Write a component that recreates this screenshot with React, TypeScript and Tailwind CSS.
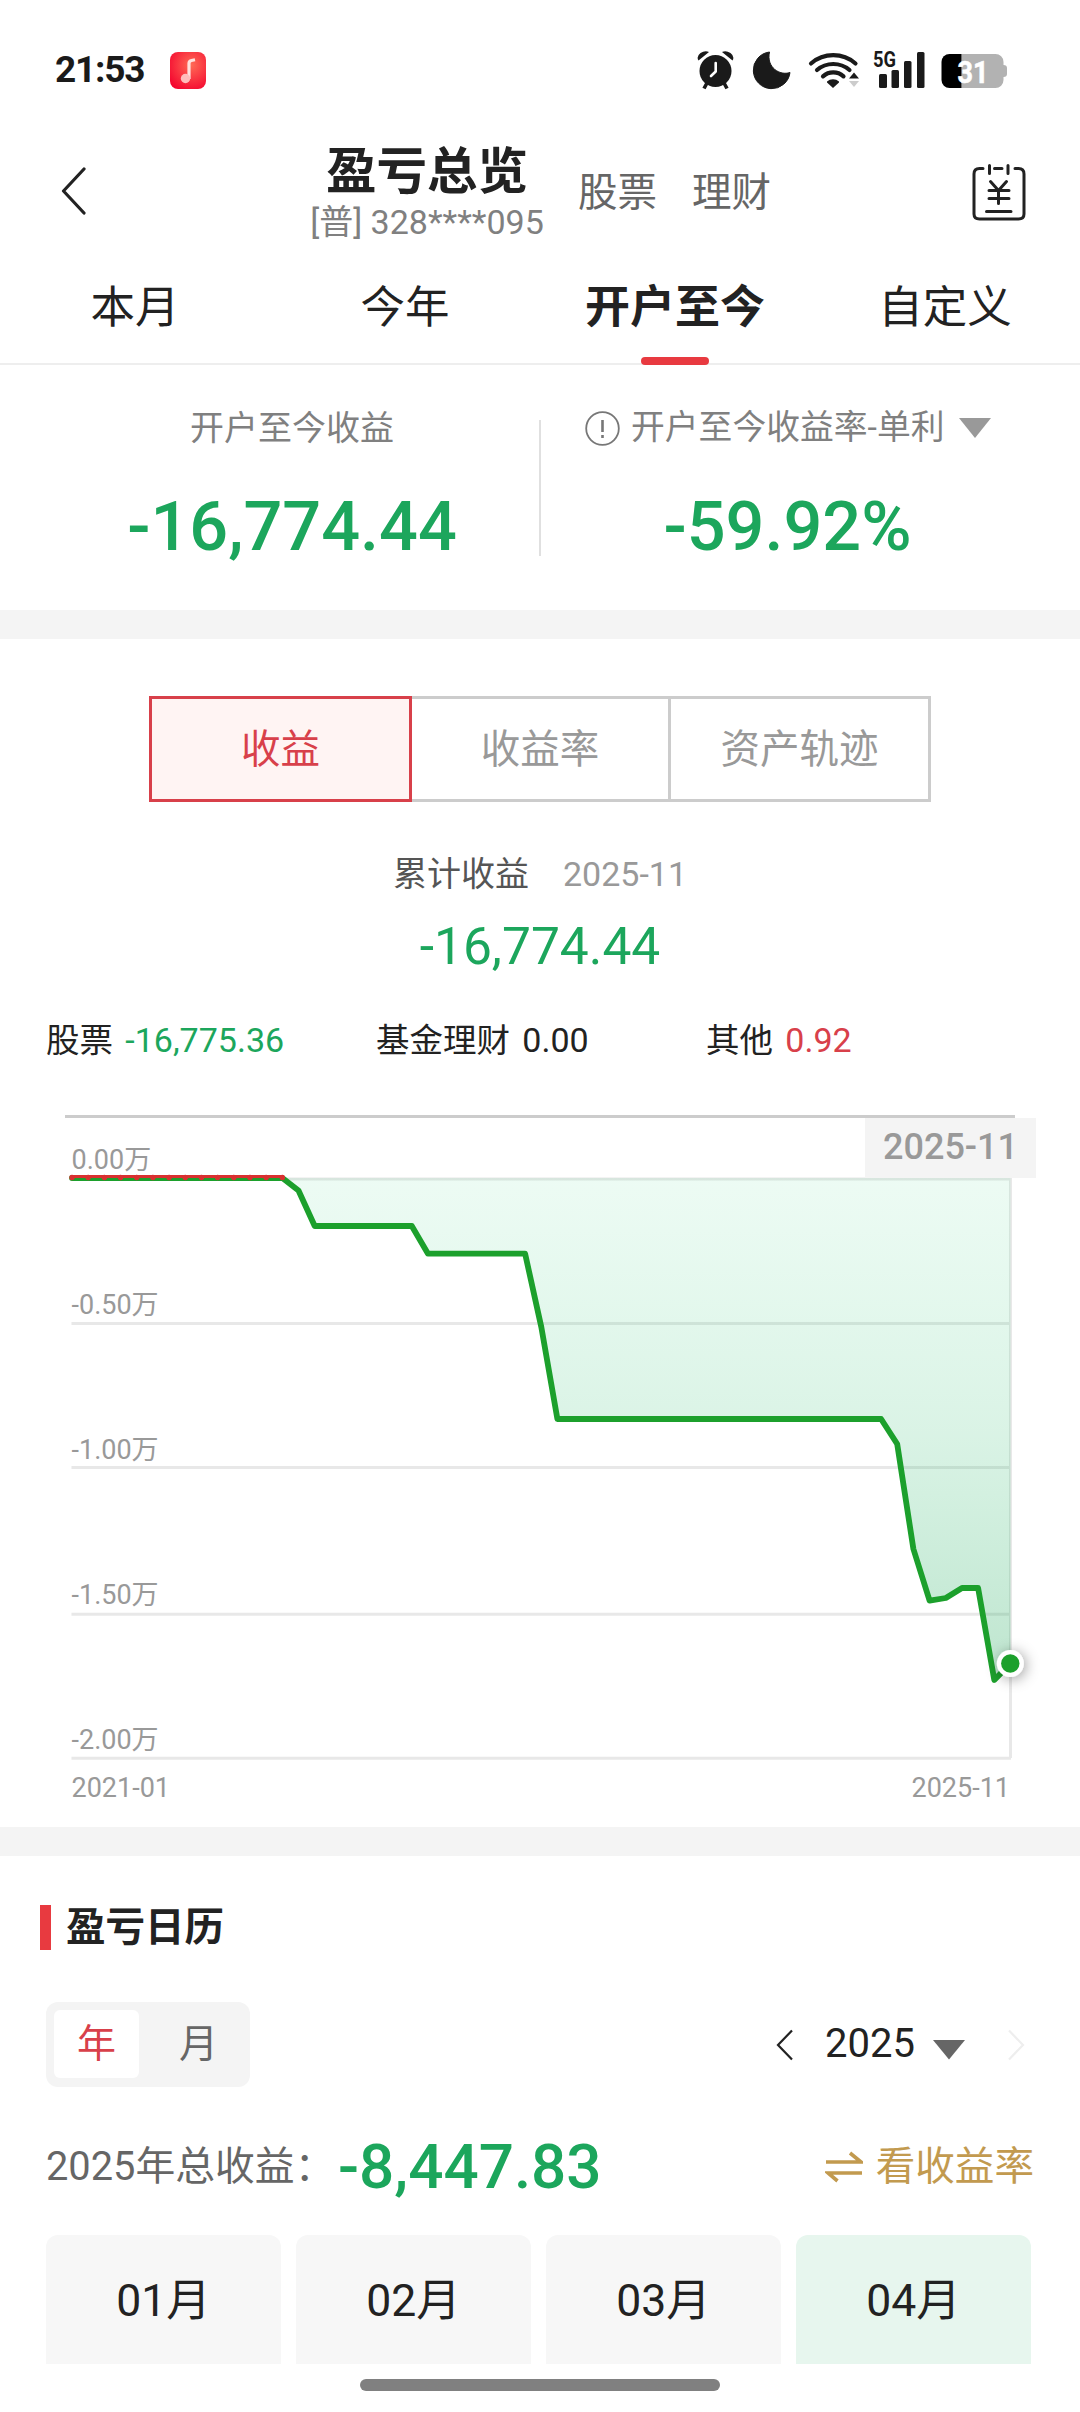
import React from "react";

const MONTHS = 58;
const LEFT = 72;
const RIGHT = 1010.5;
const xAt = (month: number) => LEFT + ((RIGHT - LEFT) * month) / MONTHS;

/* [month index since 2021-01, y inside the chart drawing] */
const SERIES: [number, number][] = [
  [0, 78], [13, 78], [14, 90.5], [15, 126], [21, 126], [22, 153.7], [28, 153.7],
  [29, 227], [30, 319], [50, 319], [51, 344], [52, 449], [53, 500.6],
  [54, 498], [55, 488], [56, 488], [57, 580], [58, 563.4],
];
const points = SERIES.map(([m, y]) => `${xAt(m).toFixed(1)},${y}`).join(" ");

const GRID = [79, 223.6, 367.5, 514.3, 658.2];
const AXIS: [string, number][] = [
  ["0.00万", 69.3], ["-0.50万", 214.2], ["-1.00万", 359.1], ["-1.50万", 504.3], ["-2.00万", 649],
];

function StatusBar() {
  return (
    <div className="flex h-[140px] items-start justify-between pt-[44px] pr-[72px] pl-[55px]">
      <div className="mt-[6px] flex h-10 items-center">
        <span className="w-[115px] text-[37px] leading-10 font-bold tracking-[-1.2px] text-[#1a1a1a]">21:53</span>
        <svg width="36" height="37" viewBox="0 0 36 37">
          <defs>
            <radialGradient id="music" cx="0.6" cy="0.35" r="0.75">
              <stop offset="0" stopColor="#ff6a55" />
              <stop offset="1" stopColor="#f4062f" />
            </radialGradient>
          </defs>
          <rect width="36" height="37" rx="8" fill="url(#music)" />
          <path d="M19 27V11.500q0-2.500 2.500-3l3.500-.7" fill="none" stroke="#ffe0dc" strokeWidth="3.200" />
          <circle cx="15.500" cy="26.500" r="4.700" fill="#ffbdbb" />
        </svg>
      </div>
      <svg width="311" height="46" viewBox="697 44 311 46" fill="#1a1a1a">
        <circle cx="715.500" cy="71" r="16" />
        <path d="M698.500 60.500q-2.500-4 2-7.500 4.500-3 8.500-1zM732.500 60.500q2.500-4-2-7.500-4.500-3-8.500-1z" />
        <path d="M707 83l-3 5.500M724 83l3 5.500" stroke="#1a1a1a" strokeWidth="3.600" />
        <path d="M715.700 63v8.500l-4.700 4.500" fill="none" stroke="#fff" strokeWidth="2.600" strokeLinecap="round" strokeLinejoin="round" />
        <path d="M769.500 52a18.400 18.400 0 1 0 20.500 20.500c-10 3.500-24-5-20.500-20.500z" stroke="#1a1a1a" strokeWidth="1" strokeLinejoin="round" />
        <g fill="none" stroke="#1a1a1a" strokeWidth="4.200" strokeLinecap="round">
          <path d="M811 63.500a34 34 0 0 1 44.500 0M817 70a25 25 0 0 1 32.500 0M823 76.300a15.500 15.500 0 0 1 20.500 0" />
        </g>
        <path d="M827 81.500a9 9 0 0 1 12 0v1l-6 5.500-6-5.500z" />
        <path d="M849 78.500l5-6 5 6z" />
        <path d="M849 81l5 6 5-6z" fill="#ccc" />
        <text x="873" y="67" fontSize="21.500" fontWeight="700" textLength="23" lengthAdjust="spacingAndGlyphs">5G</text>
        <rect x="879" y="74" width="8" height="14" rx="1.500" />
        <rect x="891.500" y="70" width="7.500" height="18" rx="1.500" />
        <rect x="904" y="61" width="7.500" height="27" rx="1.500" />
        <rect x="917" y="52" width="7.500" height="36" rx="1.500" />
        <path d="M961.500 54h34a8 8 0 0 1 8 8v3q3.500 0 3.500 3v6q0 3-3.500 3v3a8 8 0 0 1-8 8h-34z" fill="#b2b2b2" />
        <path d="M961.500 54v34h-12a8 8 0 0 1-8-8v-18a8 8 0 0 1 8-8z" fill="#000" />
        <text x="957.500" y="82.500" fontSize="31" fontWeight="700" fill="#fff" stroke="#fff" strokeWidth="0.600" textLength="31" lengthAdjust="spacingAndGlyphs">31</text>
      </svg>
    </div>
  );
}

function Header() {
  return (
    <header className="flex h-[104px] items-start">
      <svg className="mt-[27px] ml-[61px]" width="26" height="48" viewBox="0 0 26 48" fill="none" stroke="#222" strokeWidth="3.200" strokeLinecap="round" strokeLinejoin="round">
        <path d="M23 2L2.500 24 23 46" />
      </svg>
      <div className="ml-[222px] flex w-[236px] flex-col items-center">
        <h1 className="mt-[7px] text-[50.500px] leading-[50px] font-bold text-[#222]">盈亏总览</h1>
        <p className="mt-[5px] text-[34px] leading-[41px] whitespace-nowrap text-[#808080]">[普] 328****095</p>
      </div>
      <nav className="mt-[32px] ml-[33px] flex gap-[35px] text-[39.500px] leading-[41px] text-[#666]">
        <span>股票</span>
        <span>理财</span>
      </nav>
      <svg className="mt-6 mr-[54px] ml-auto" width="54" height="57" viewBox="0 0 54 57" fill="none" stroke="#222" strokeWidth="3" strokeLinecap="round" strokeLinejoin="round">
        <path d="M11 4.500H7.500q-5.500 0-5.500 5.500v40q0 5 5.500 5h39q5.500 0 5.500-5V10q0-5.500-5.500-5.500H43M22.500 4.500H30M17.500 1.500v8M36 1.500v8" />
        <path d="M18.500 17.500l8 9 8-9M17 26.500h20M17 34.500h20M26.500 26.500v13M14.500 47.500H39" />
      </svg>
    </header>
  );
}

function RangeTabs() {
  return (
    <nav className="grid h-[121px] grid-cols-4 border-b-2 border-[#eee] text-center text-[44.500px] leading-[128px] text-[#222]">
      <span>本月</span>
      <span>今年</span>
      <span className="relative text-[45px] font-bold">
        开户至今
        <i className="absolute top-[113px] left-1/2 h-2 w-[68px] -translate-x-1/2 rounded-full bg-[#e83a40]" />
      </span>
      <span>自定义</span>
    </nav>
  );
}

function Summary() {
  return (
    <section className="flex h-[245px] text-center">
      <div className="w-[539px] pl-[45px]">
        <p className="mt-[43px] text-[34px] leading-[40px] text-[#808080]">开户至今收益</p>
        <p className="mt-[39px] text-[68.400px] leading-[80px] font-medium text-[#1ca65c]">-16,774.44</p>
      </div>
      <div className="mt-[55px] h-[136px] w-[2px] bg-[#e0e0e0]" />
      <div className="w-[539px]">
        <div className="mt-[43px] flex items-center pl-[44px] text-[33.800px] leading-[40px] text-[#808080]">
          <svg className="mr-[11px]" width="35" height="35" viewBox="0 0 35 35" fill="none" stroke="#777" strokeWidth="1.800">
            <circle cx="17.500" cy="17.500" r="16.300" />
            <path d="M17.500 9v12M17.500 24v3" strokeWidth="2.600" />
          </svg>
          <span>开户至今收益率-单利</span>
          <svg className="ml-[14px]" width="32" height="20" viewBox="0 0 32 20">
            <path d="M0 0h32L16 20z" fill="#999" />
          </svg>
        </div>
        <p className="mt-[39px] mr-[46px] text-[68.400px] leading-[80px] font-medium text-[#1ca65c]">-59.92%</p>
      </div>
    </section>
  );
}

function Chart() {
  return (
    <svg className="block" width="1080" height="728" viewBox="0 0 1080 728">
      <defs>
        <linearGradient id="loss" gradientUnits="userSpaceOnUse" x1="0" y1="78" x2="0" y2="580">
          <stop offset="0" stopColor="#28d27a" stopOpacity="0.085" />
          <stop offset="0.500" stopColor="#20b865" stopOpacity="0.165" />
          <stop offset="1" stopColor="#1fa558" stopOpacity="0.290" />
        </linearGradient>
        <filter id="dotShadow" x="-100%" y="-100%" width="300%" height="300%">
          <feDropShadow dx="2" dy="2" stdDeviation="7" floodColor="#000" floodOpacity="0.380" />
        </filter>
      </defs>
      <path d="M65 16.500H1015" stroke="#ccc" strokeWidth="3" />
      <g stroke="#e8e8e8" strokeWidth="3">
        {GRID.map((y) => (
          <path key={y} d={`M71.500 ${y}H1011`} />
        ))}
        <path d="M1010.500 78V658" />
      </g>
      <polygon points={`${points} ${RIGHT},78`} fill="url(#loss)" />
      <g fontSize="27" fill="#999">
        {AXIS.map(([label, y]) => (
          <text key={label} x="71.500" y={y}>{label}</text>
        ))}
        <text x="71.500" y="697">2021-01</text>
        <text x="1010" y="697" textAnchor="end">2025-11</text>
      </g>
      <polyline points={points} fill="none" stroke="#1ca02c" strokeWidth="5.800" strokeLinejoin="round" strokeLinecap="round" />
      <path d={`M72 76.500H${xAt(13)}`} stroke="#d93030" strokeWidth="3.200" strokeLinecap="round" />
      <path d={`M72 77.500H${xAt(13) + 1}`} stroke="#d93030" strokeWidth="5.400" strokeDasharray="0 16.180" strokeLinecap="round" />
      <rect x="865" y="18" width="171" height="60" fill="#f4f4f4" />
      <text x="883" y="59" fontSize="36" fontWeight="500" fill="#999">2025-11</text>
      <circle cx="1010.300" cy="563.500" r="13.500" fill="#fff" filter="url(#dotShadow)" />
      <circle cx="1010.300" cy="563.500" r="9.200" fill="#1ca02c" />
    </svg>
  );
}

function ProfitSection() {
  return (
    <section className="h-[1188px] pt-[57px]">
      <div className="ml-[149px] flex h-[106px] w-[782px] text-center text-[39.500px] leading-[101px]">
        <div className="w-[263px] border-3 border-[#d8404a] bg-[#fff4f3] text-[#d8404a]">收益</div>
        <div className="w-[259px] border-y-3 border-r-3 border-[#ccc] text-[#999]">收益率</div>
        <div className="w-[260px] border-y-3 border-r-3 border-[#ccc] text-[#999]">资产轨迹</div>
      </div>
      <div className="mt-[52px] flex justify-center gap-[34px] text-[34px] leading-[40px]">
        <span className="text-[#555]">累计收益</span>
        <span className="text-[#999]">2025-11</span>
      </div>
      <p className="mt-[23px] text-center text-[51.500px] leading-[60px] text-[#1ca65c]">-16,774.44</p>
      <div className="mt-[43px] flex h-[40px] pl-[46px] text-[33.500px] leading-[40px] text-[#222]">
        <p className="w-[330px]">股票 <span className="ml-[4px] text-[34px] text-[#1ca65c]">-16,775.36</span></p>
        <p className="w-[330px]">基金理财 <span className="ml-[4px] text-[34px]">0.00</span></p>
        <p>其他 <span className="ml-[4px] text-[34px] text-[#d8404a]">0.92</span></p>
      </div>
      <div className="mt-[40px]">
        <Chart />
      </div>
    </section>
  );
}

function CalendarSection() {
  return (
    <section className="pt-[49px]">
      <div className="flex h-[45px] items-center pl-[40px]">
        <i className="h-[45px] w-[11px] bg-[#e83a40]" />
        <h2 className="ml-[15px] text-[39.500px] leading-[46px] font-bold text-[#222]">盈亏日历</h2>
      </div>
      <div className="mt-[52px] flex h-[85px] items-center justify-between pr-[55px] pl-[46px]">
        <div className="flex h-[85px] w-[204px] rounded-[12px] bg-[#f4f4f4] p-2 text-center text-[39px] leading-[68px]">
          <span className="h-[68px] w-[85px] rounded-[6px] bg-white text-[#d8404a]">年</span>
          <span className="flex-1 pl-[16px] text-[#666]">月</span>
        </div>
        <div className="flex items-center text-[40px] leading-[40px] text-[#222]">
          <svg width="17" height="32" viewBox="0 0 17 32" fill="none" stroke="#222" strokeWidth="2.200">
            <path d="M16 1.500L2 16 16 30.500" />
          </svg>
          <span className="-mt-[2px] ml-[32px]">2025</span>
          <svg className="mt-[11px] ml-[18px]" width="32" height="20" viewBox="0 0 32 20">
            <path d="M0 0h32L16 19.500z" fill="#666" />
          </svg>
          <svg className="ml-[43px]" width="17" height="32" viewBox="0 0 17 32" fill="none" stroke="#eee" strokeWidth="2.200">
            <path d="M1 1.500L15 16 1 30.500" />
          </svg>
        </div>
      </div>
      <div className="mt-[42px] flex h-[76px] items-center pr-[46px] pl-[46px]">
        <span className="w-[292px] text-[39.800px] leading-[76px] whitespace-nowrap text-[#666]">2025年总收益：</span>
        <span className="text-[62px] leading-[76px] font-medium text-[#1ca65c]">-8,447.83</span>
        <svg className="ml-auto" width="38" height="32" viewBox="0 0 38 32" fill="none" stroke="#c29a4f" strokeWidth="3.600">
          <path d="M1 11H36L25 2M37 22H3L12.500 30" />
        </svg>
        <span className="ml-[13px] text-[39.600px] leading-[76px] text-[#c29a4f]">看收益率</span>
      </div>
      <div className="mt-[30px] grid h-[129px] grid-cols-4 gap-[15px] overflow-hidden pr-[49px] pl-[46px] text-center text-[44.500px] leading-[133px] text-[#222]">
        <div className="rounded-t-[12px] bg-[#f7f7f7]">01月</div>
        <div className="rounded-t-[12px] bg-[#f7f7f7]">02月</div>
        <div className="rounded-t-[12px] bg-[#f7f7f7]">03月</div>
        <div className="rounded-t-[12px] bg-[#e7f6ee]">04月</div>
      </div>
      <div className="mx-auto mt-[15px] h-3 w-[360px] rounded-full bg-[#808080]" />
    </section>
  );
}

export default function App() {
  return (
    <main className="h-[2412px] w-[1080px] overflow-hidden bg-white font-['Roboto','Noto_Sans_CJK_SC',sans-serif]">
      <StatusBar />
      <Header />
      <RangeTabs />
      <Summary />
      <div className="h-[29px] bg-[#f4f4f4]" />
      <ProfitSection />
      <div className="h-[29px] bg-[#f4f4f4]" />
      <CalendarSection />
    </main>
  );
}
